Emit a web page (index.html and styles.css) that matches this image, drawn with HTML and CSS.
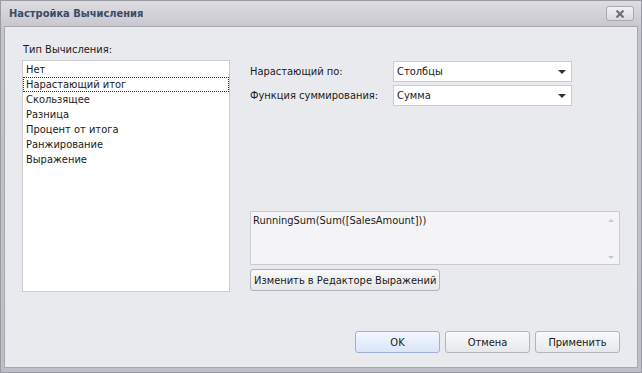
FILE: index.html
```html
<!DOCTYPE html>
<html lang="ru">
<head>
    <meta charset="UTF-8">
    <title>Настройка Вычисления</title>
    <link rel="stylesheet" href="styles.css">
</head>
<body>
    <div class="window">
        <div class="titlebar">
            <span class="title">Настройка Вычисления</span>
            <span class="close-btn">
                <svg width="10" height="8" viewBox="0 0 10 8">
                    <path d="M1.5 0.5 L8.5 7.5 M8.5 0.5 L1.5 7.5" stroke="#707078" stroke-width="2.2" fill="none"/>
                </svg>
            </span>
        </div>
        <div class="content">
            <div class="main">
                <div class="left">
                    <div class="caption">Тип Вычисления:</div>
                    <ul class="listbox">
                        <li>Нет</li>
                        <li class="focused">Нарастающий итог</li>
                        <li>Скользящее</li>
                        <li>Разница</li>
                        <li>Процент от итога</li>
                        <li>Ранжирование</li>
                        <li>Выражение</li>
                    </ul>
                </div>
                <div class="right">
                    <div class="field">
                        <span class="field-label">Нарастающий по:</span>
                        <div class="combo"><span>Столбцы</span><span class="arrow"></span></div>
                    </div>
                    <div class="field">
                        <span class="field-label">Функция суммирования:</span>
                        <div class="combo"><span>Сумма</span><span class="arrow"></span></div>
                    </div>
                    <div class="expr">
                        <span>RunningSum(Sum([SalesAmount]))</span>
                        <div class="scroll">
                            <span class="up"></span>
                            <span class="down"></span>
                        </div>
                    </div>
                    <button class="btn edit-btn">Изменить в Редакторе Выражений</button>
                </div>
            </div>
            <div class="footer">
                <button class="btn ok">OK</button>
                <button class="btn">Отмена</button>
                <button class="btn">Применить</button>
            </div>
        </div>
    </div>
</body>
</html>
```

FILE: styles.css
```css
html, body {
    margin: 0;
    padding: 0;
}

body {
    font-family: "DejaVu Sans Condensed", "Liberation Sans", Arial, sans-serif;
    font-size: 11px;
    color: #1a1a1a;
    width: 642px;
    height: 373px;
    overflow: hidden;
}

.window {
    box-sizing: border-box;
    width: 642px;
    height: 373px;
    border: 1px solid #9a9aa2;
    background: linear-gradient(#dcdce1, #c4c4ca 30px, #bebec4);
    padding: 0 3px 4px 3px;
    display: flex;
    flex-direction: column;
}

/* タイトルバー */
.titlebar {
    height: 25px;
    display: flex;
    align-items: center;
    justify-content: space-between;
    padding: 0 4px 0 5px;
}

.title {
    font-weight: bold;
    color: #3b4b66;
    font-size: 11px;
}

.close-btn {
    box-sizing: border-box;
    width: 28px;
    height: 15px;
    border: 1px solid #a8a8b0;
    border-radius: 3px;
    background: linear-gradient(#f2f2f4, #dadadf);
    display: flex;
    align-items: center;
    justify-content: center;
}

.content {
    flex: 1;
    border: 1px solid #a6a7af;
    background: #e9eaee;
    display: flex;
    flex-direction: column;
    padding: 16px 17px 14px 17px;
}

.main {
    flex: 1;
    display: flex;
}

.left {
    width: 208px;
    display: flex;
    flex-direction: column;
}

.caption {
    padding-left: 1px;
    height: 17px;
    line-height: 14px;
}

.listbox {
    box-sizing: border-box;
    list-style: none;
    margin: 0;
    padding: 1px 0;
    height: 232px;
    background: #fff;
    border: 1px solid #c9ccd3;
}

.listbox li {
    height: 15px;
    line-height: 15px;
    padding-left: 3px;
    box-sizing: border-box;
}

.listbox .focused {
    border: 1px dotted #303030;
    padding-left: 2px;
    line-height: 13px;
}

.right {
    margin-left: 20px;
    padding-top: 18px;
    width: 370px;
}

.field {
    display: flex;
    align-items: center;
    margin-bottom: 3px;
}

.field-label {
    width: 143px;
}

.combo {
    box-sizing: border-box;
    width: 179px;
    height: 21px;
    background: #fff;
    border: 1px solid #c9ccd3;
    display: flex;
    align-items: center;
    justify-content: space-between;
    padding: 0 5px 0 3px;
}

.arrow {
    width: 0;
    height: 0;
    border-left: 4px solid transparent;
    border-right: 4px solid transparent;
    border-top: 4px solid #333;
}

.expr {
    box-sizing: border-box;
    margin-top: 105px;
    width: 370px;
    height: 54px;
    background: #f4f4f7;
    border: 1px solid #c9ccd3;
    display: flex;
    justify-content: space-between;
    padding: 2px 0 0 2px;
}

.scroll {
    width: 17px;
    display: flex;
    flex-direction: column;
    justify-content: space-between;
    align-items: center;
    padding: 5px 0 5px;
}

.scroll span {
    width: 0;
    height: 0;
    border-left: 3px solid transparent;
    border-right: 3px solid transparent;
}

.scroll .up {
    border-bottom: 3px solid #c6c6cc;
}

.scroll .down {
    border-top: 3px solid #c6c6cc;
}

/* ボタン */
.btn {
    font-family: inherit;
    font-size: 11px;
    color: #1a1a1a;
    height: 22px;
    border: 1px solid #b3b4ba;
    border-radius: 3px;
    background: linear-gradient(#fafafb, #e6e7ea);
    padding: 0 3px;
    margin: 0;
}

.edit-btn {
    margin-top: 4px;
}

.footer {
    display: flex;
    justify-content: flex-end;
    gap: 5px;
}

.footer .btn {
    width: 85px;
}

.ok {
    background: linear-gradient(#f2f6fe, #dbe5f9);
    border-color: #9fb0cf;
}
```
